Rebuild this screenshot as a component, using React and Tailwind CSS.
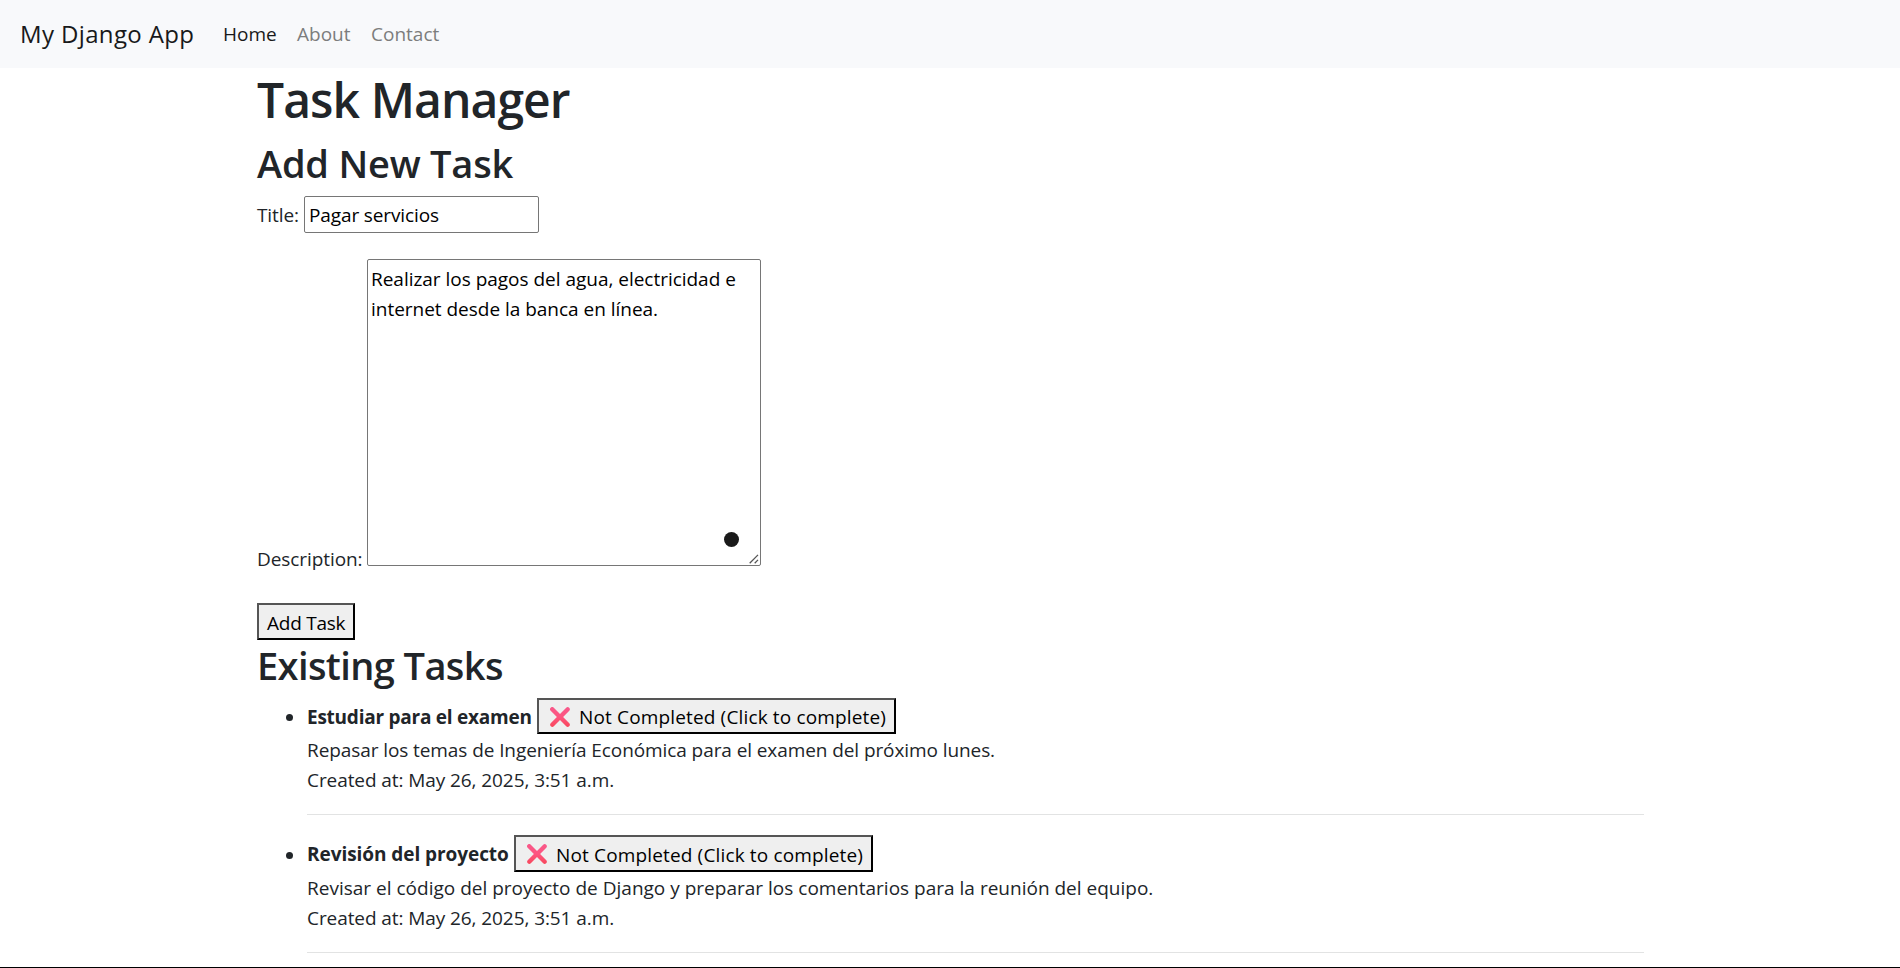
function CrossMark() {
  return (
    <svg viewBox="0 0 20 20" className="size-5 shrink-0" aria-hidden="true">
      <defs>
        <linearGradient id="cross-fill" x1="0" y1="0" x2="0" y2="1">
          <stop offset="0" stopColor="#f8588a" />
          <stop offset="0.5" stopColor="#fd5580" />
          <stop offset="1" stopColor="#f8485c" />
        </linearGradient>
      </defs>
      <path
        d="M0.7 0.7a2.2 2.2 0 0 1 3.1 0L10 6.9l6.2-6.2a2.2 2.2 0 0 1 3.1 3.1L13.1 10l6.2 6.2a2.2 2.2 0 0 1-3.1 3.1L10 13.1l-6.2 6.2a2.2 2.2 0 0 1-3.1-3.1L6.9 10 0.7 3.8a2.2 2.2 0 0 1 0-3.1Z"
        fill="url(#cross-fill)"
      />
    </svg>
  );
}

function ResizeGrip() {
  return (
    <svg viewBox="0 0 10 10" className="pointer-events-none absolute right-[2px] bottom-[2px] size-[10px]" aria-hidden="true">
      <path d="M0.7 9.2 9 0.9M5.7 9.2 9 5.9" stroke="#555" strokeWidth="1.3" fill="none" />
    </svg>
  );
}

const buttonClass =
  "border-2 border-t-[#555] border-l-[#555] border-r-black border-b-black bg-[#efefef] text-black flex items-center whitespace-nowrap";

const tasks = [
  {
    title: "Estudiar para el examen",
    titleClass: "tracking-[-0.24px] w-[230px] pt-px",
    rowClass: "h-9",
    labelClass: "tracking-[0.15px]",
    bulletClass: "mt-4",
    text: "Repasar los temas de Ingeniería Económica para el examen del próximo lunes.",
    textClass: "tracking-[-0.085px]",
  },
  {
    title: "Revisión del proyecto",
    titleClass: "tracking-[-0.06px] w-[207px]",
    rowClass: "h-[37px]",
    labelClass: "tracking-[0.15px] pt-px",
    bulletClass: "mt-[17px]",
    text: "Revisar el código del proyecto de Django y preparar los comentarios para la reunión del equipo.",
    textClass: "tracking-[0.006px]",
  },
];

export default function App() {
  return (
    <div className="flex h-screen flex-col overflow-hidden border-b border-black bg-white font-['Open_Sans','Noto_Sans',sans-serif] text-[19px] leading-[30px] text-[#212529]">
      <nav className="flex h-[68px] shrink-0 items-center bg-[#f8f9fb] pl-5">
        <a className="w-[203px] text-2xl tracking-[0.37px] text-[#18191a]">My Django App</a>
        <a className="w-[74px] text-[#18191a]">Home</a>
        <a className="w-[74px] text-[#7c7d7d]">About</a>
        <a className="text-[#7c7d7d]">Contact</a>
      </nav>

      <main className="ml-[257px] w-[1387px] shrink-0">
        <h1 className="mb-[7px] pt-px text-5xl leading-[62px] font-semibold tracking-[-0.92px]">Task Manager</h1>
        <h2 className="mb-2 text-[38px] leading-[50px] font-semibold tracking-[-0.22px]">Add New Task</h2>

        <form>
          <div className="flex h-[37px] items-center">
            <label className="w-[47px] tracking-[-0.1px]">Title:</label>
            <input
              defaultValue="Pagar servicios"
              className="h-[37px] w-[235px] rounded-[2px] border border-[#767676] bg-white pr-[3px] pl-1 tracking-[-0.12px] text-black"
            />
          </div>

          <div className="mt-[26px] flex items-end">
            <label className="-mb-2 w-[110px] tracking-[-0.08px]">Description:</label>
            <div className="relative h-[307px] w-[394px]">
              <textarea
                defaultValue="Realizar los pagos del agua, electricidad e internet desde la banca en línea."
                className="block h-[307px] w-[394px] resize-none rounded-[2px] border border-[#767676] bg-white px-[3px] py-1 tracking-[-0.02px] text-black"
              />
              <span className="absolute right-[22px] bottom-[19px] size-[15px] rounded-full bg-[#1a1a1a]" />
              <ResizeGrip />
            </div>
          </div>

          <button type="button" className={`${buttonClass} mt-[37px] h-[37px] w-[98px] pt-0.5 pl-2`}>
            <span className="tracking-[-0.25px]">Add Task</span>
          </button>
        </form>

        <h2 className="mb-2 text-[38px] leading-[50px] font-semibold tracking-[-0.6px]">Existing Tasks</h2>

        <ul>
          {tasks.map((task) => (
            <li key={task.title} className="flex pl-[29px]">
              <span className={`${task.bulletClass} mr-[14px] size-[7px] shrink-0 rounded-full bg-[#212529]`} />
              <div className="flex-1">
                <div className={`${task.rowClass} flex items-center`}>
                  <strong className={`${task.titleClass} shrink-0 font-bold whitespace-nowrap`}>{task.title}</strong>
                  <button type="button" className={`${buttonClass} ${task.rowClass} w-[359px] gap-[9px] pt-px pl-[11px]`}>
                    <CrossMark />
                    <span className={task.labelClass}>Not Completed (Click to complete)</span>
                  </button>
                </div>
                <p className={`${task.textClass} pt-px`}>{task.text}</p>
                <p className="tracking-[-0.08px]">Created at: May 26, 2025, 3:51 a.m.</p>
                <hr className="mt-[19px] mb-5 border-t border-[#e2e3e3]" />
              </div>
            </li>
          ))}
        </ul>
      </main>
    </div>
  );
}
